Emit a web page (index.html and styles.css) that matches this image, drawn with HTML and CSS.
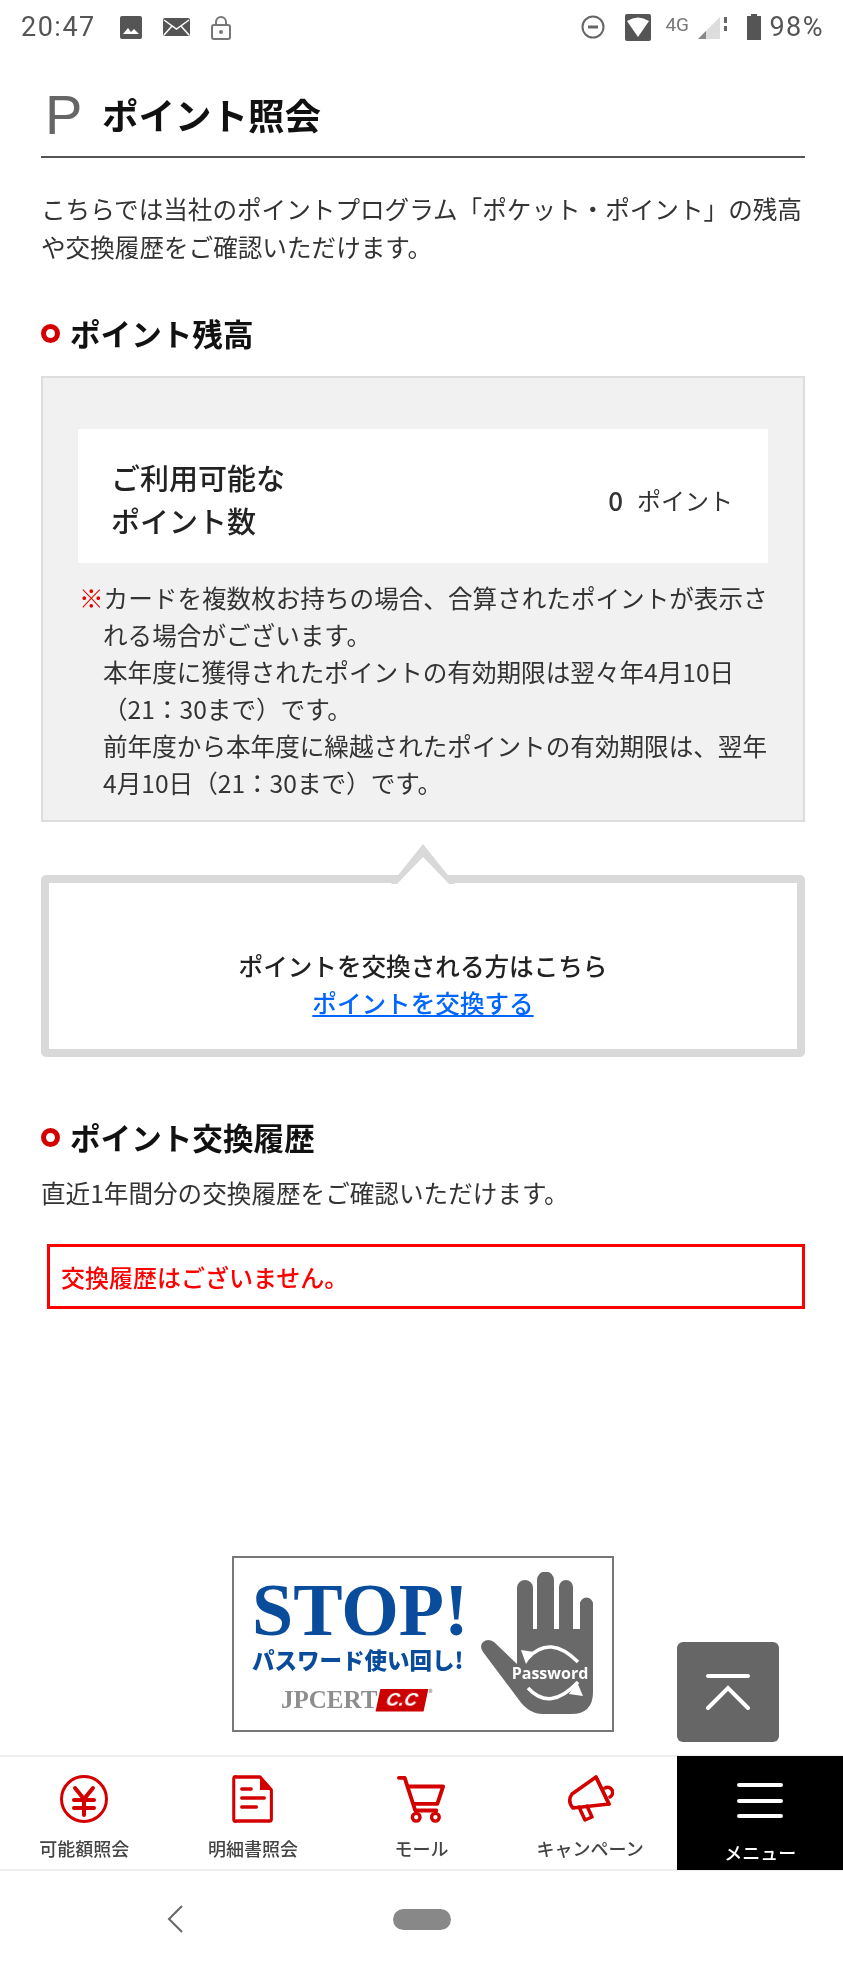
FILE: index.html
```html
<!DOCTYPE html>
<html lang="ja">
  <head>
    <meta charset="UTF-8">
    <title>ポイント照会</title>
    <meta name="viewport" content="width=device-width">
    <link rel="stylesheet" href="styles.css">
  </head>
  <body>
    <div class="page">
      <!-- Android status bar -->
      <div class="statusBar">
        <span class="clock">20:47</span>
        <svg class="statusIcon iconPicture" viewBox="0 0 22 23"><path fill="#555" d="M2 0h18a2 2 0 0 1 2 2v19a2 2 0 0 1-2 2H2a2 2 0 0 1-2-2V2a2 2 0 0 1 2-2z"/><path fill="#fff" d="M3 18l5-6 3 4 3-3 5 5z"/></svg>
        <svg class="statusIcon iconMail" viewBox="0 0 27 18"><rect width="27" height="18" rx="2" fill="#555"/><path d="M1 2l12.500 9L26 2M1 17l8-9M26 17l-8-9" fill="none" stroke="#fff" stroke-width="1.500"/></svg>
        <svg class="statusIcon iconLock" viewBox="0 0 22 25"><path d="M6 11V7a5 5 0 0 1 10 0v4" fill="none" stroke="#777" stroke-width="2"/><rect x="2" y="10" width="18" height="14" rx="2" fill="none" stroke="#777" stroke-width="2"/><circle cx="11" cy="17" r="2" fill="#777"/></svg>
        <span class="statusGap"></span>
        <svg class="statusIcon iconDnd" viewBox="0 0 24 24"><circle cx="12" cy="12" r="10.500" fill="none" stroke="#666" stroke-width="2"/><rect x="7" y="10.500" width="10" height="3" fill="#666"/></svg>
        <svg class="statusIcon iconWifi" viewBox="0 0 26 27"><rect width="26" height="27" rx="2" fill="#555"/><path d="M2 7q11-7 22 0L13 23z" fill="#fff"/></svg>
        <span class="netType">4G</span>
        <svg class="statusIcon iconSignal" viewBox="0 0 31 24"><path d="M0 24L22 2v22z" fill="#ddd"/><path d="M0 24l8-8v8z" fill="#888"/><rect x="26" y="2" width="3" height="6" fill="#666"/><rect x="26" y="11" width="3" height="5" fill="#666"/></svg>
        <svg class="statusIcon iconBattery" viewBox="0 0 14 26"><path d="M4 0h6v2h4v24H0V2h4z" fill="#555"/></svg>
        <span class="batteryLevel">98%</span>
      </div>

      <main class="content">
        <h1 class="pageTitle"><span class="titleLetter">P</span>ポイント照会</h1>
        <p class="bodyText intro">こちらでは当社のポイントプログラム「ポケット・ポイント」の残高<br>や交換履歴をご確認いただけます。</p>

        <h2 class="sectionTitle balanceTitle">ポイント残高</h2>
        <section class="balancePanel">
          <div class="balanceRow">
            <div class="balanceLabel">ご利用可能な<br>ポイント数</div>
            <div class="balanceValue"><strong>0</strong><span>ポイント</span></div>
          </div>
          <p class="balanceNote"><span class="noteMark">※</span>カードを複数枚お持ちの場合、合算されたポイントが表示さ<br>れる場合がございます。<br>本年度に獲得されたポイントの有効期限は翌々年4月10日<br>（21：30まで）です。<br>前年度から本年度に繰越されたポイントの有効期限は、翌年<br>4月10日（21：30まで）です。</p>
        </section>

        <section class="callout">
          <p class="calloutText">ポイントを交換される方はこちら</p>
          <a class="calloutLink" href="#">ポイントを交換する</a>
        </section>

        <h2 class="sectionTitle historyTitle">ポイント交換履歴</h2>
        <p class="bodyText historyText">直近1年間分の交換履歴をご確認いただけます。</p>
        <div class="errorBox">交換履歴はございません。</div>

        <div class="banner">
          <div class="bannerText">
            <div class="bannerStop">STOP!</div>
            <div class="bannerSub">パスワード使い回し!</div>
            <div class="bannerLogo"><span class="logoName">JPCERT</span><span class="logoBadge">C.C</span><span class="logoMark">®</span></div>
          </div>
          <svg class="bannerHand" viewBox="0 0 112 142">
            <path fill="#696969" d="M36 16a8 8 0 0 1 16 0v41h4V8a8.500 8.500 0 0 1 17 0v49h5V15a7 7 0 0 1 14 0v42h7V32a6.500 6.500 0 0 1 13 0v88q0 22-22 22H62q-14 0-24-14L2 80q-4-6 0-10q5-4 11 0l23 22z"/>
            <path fill="none" stroke="#fff" stroke-width="3.500" d="M47 86q22-24 50 4M47 116q22 24 50-6"/>
            <path fill="#fff" d="M40 78l13 2-8 12zM102 124l-14-2 8-12z"/>
            <text class="handText" x="69" y="107" text-anchor="middle">Password</text>
          </svg>
        </div>
      </main>

      <button class="toTop" type="button" aria-label="top">
        <svg viewBox="0 0 44 36" width="44" height="36"><path d="M2 2h40M2 34l20-20 20 20" fill="none" stroke="#fff" stroke-width="4" stroke-linecap="round"/></svg>
      </button>

      <nav class="tabBar">
        <a class="tab" href="#">
          <svg class="tabIcon" viewBox="0 0 48 48"><circle cx="24" cy="24" r="22.500" fill="none" stroke="#d40000" stroke-width="3"/><path d="M15 13l9 11 9-11M14 25h20M14 33h20M24 24v16" fill="none" stroke="#d40000" stroke-width="4" stroke-linecap="round"/></svg>
          <span>可能額照会</span>
        </a>
        <a class="tab" href="#">
          <svg class="tabIcon tabIconDoc" viewBox="0 0 48 48" preserveAspectRatio="none"><path d="M5 2h27l13 13v29a2 2 0 0 1-2 2H5a2 2 0 0 1-3-2V4a2 2 0 0 1 3-2z" fill="none" stroke="#d40000" stroke-width="3.500" stroke-linejoin="round"/><path d="M32 2v13h13z" fill="#d40000"/><path d="M11 14h11M11 23h26M11 32h17" fill="none" stroke="#d40000" stroke-width="3.500" stroke-linecap="round"/></svg>
          <span>明細書照会</span>
        </a>
        <a class="tab" href="#">
          <svg class="tabIcon" viewBox="0 0 50 50"><path d="M2 3h6l11 34h22" fill="none" stroke="#d40000" stroke-width="4" stroke-linecap="round" stroke-linejoin="round"/><path d="M11 12h37l-6 18H17" fill="none" stroke="#d40000" stroke-width="4" stroke-linejoin="round"/><circle cx="20" cy="44" r="4" fill="none" stroke="#d40000" stroke-width="3.500"/><circle cx="40" cy="44" r="4" fill="none" stroke="#d40000" stroke-width="3.500"/></svg>
          <span>モール</span>
        </a>
        <a class="tab" href="#">
          <svg class="tabIcon" viewBox="0 0 48 48"><path d="M6 19l24-17 13 27-27 3-9 1q-6-7-1-14z" fill="none" stroke="#d40000" stroke-width="3.500" stroke-linejoin="round"/><path d="M30 2l13 27M39 13a5 5 0 0 1 5 9M13 32l6 13 7-3-5-11" fill="none" stroke="#d40000" stroke-width="3.500" stroke-linejoin="round" stroke-linecap="round"/></svg>
          <span>キャンペーン</span>
        </a>
        <a class="tab tabMenu" href="#">
          <svg class="tabIcon" viewBox="0 0 48 48"><path d="M3 2h42M3 18h42M3 33h42" fill="none" stroke="#fff" stroke-width="4" stroke-linecap="round"/></svg>
          <span>メニュー</span>
        </a>
      </nav>

      <div class="navBar">
        <svg class="navBack" viewBox="0 0 17 28"><path d="M15 1L2 14l13 13" fill="none" stroke="#666" stroke-width="2"/></svg>
        <span class="navHome"></span>
      </div>
    </div>
  </body>
</html>
```

FILE: styles.css
```css
*, *::before, *::after { box-sizing: border-box; }
html, body { margin: 0; background: #fff; }
body {
  color: #333;
  font-family: "Noto Sans CJK JP", "Noto Sans", sans-serif;
}
p { margin: 0; }
.page {
  position: relative;
  width: 843px;
  height: 1967px;
  overflow: hidden;
  filter: blur(0.6px);
}

/* status bar */
.statusBar {
  display: flex;
  align-items: center;
  height: 54px;
  padding: 0 20px 0 21px;
  color: #555;
  font-family: Roboto, sans-serif;
}
.clock { font-size: 27px; letter-spacing: 1.500px; width: 99px; white-space: nowrap; }
.statusIcon { display: block; flex: none; }
.iconPicture { width: 22px; height: 23px; }
.iconMail { width: 27px; height: 18px; margin-left: 21px; }
.iconLock { width: 22px; height: 25px; margin-left: 20px; }
.statusGap { flex: 1; }
.iconDnd { width: 24px; height: 24px; }
.iconWifi { width: 26px; height: 27px; margin-left: 20px; }
.netType { font-size: 19px; width: 33px; margin-left: 14px; margin-top: -6px; color: #777; }
.iconSignal { width: 31px; height: 24px; }
.iconBattery { width: 14px; height: 26px; margin-left: 18px; }
.batteryLevel { font-size: 27px; letter-spacing: 1.500px; margin-left: 8px; margin-right: -1px; }

/* main column */
.content { padding: 0 38px 0 41px; }
.pageTitle {
  display: flex;
  align-items: center;
  margin: 0;
  height: 104px;
  padding: 39px 0 19px;
  border-bottom: 2px solid #555;
  color: #111;
  font-size: 36.500px;
  font-weight: 700;
  line-height: 44px;
}
.titleLetter {
  width: 61px;
  padding-left: 4px;
  color: #666;
  font-family: "Liberation Sans", sans-serif;
  font-size: 56px;
  font-weight: 400;
}
.bodyText {
  font-size: 24.600px;
  line-height: 38px;
  white-space: nowrap;
}
.intro { margin-top: 31px; }
.sectionTitle {
  display: flex;
  align-items: center;
  margin: 0;
  color: #111;
  font-size: 30.600px;
  font-weight: 700;
  line-height: 40px;
}
.sectionTitle::before {
  content: "";
  width: 19px;
  height: 19px;
  margin-right: 10px;
  border: 5px solid #d40000;
  border-radius: 50%;
}
.balanceTitle { margin-top: 48px; }
.balancePanel {
  margin-top: 23px;
  padding: 51px 35px 19px;
  background: #f1f1f1;
  border: 2px solid #ddd;
}
.balanceRow {
  display: flex;
  justify-content: space-between;
  align-items: center;
  padding: 27px 35px 21px 33px;
  background: #fff;
}
.balanceLabel {
  color: #222;
  font-size: 29px;
  font-weight: 500;
  line-height: 43px;
}
.balanceValue {
  display: flex;
  align-items: center;
  gap: 14px;
  font-size: 24px;
  white-space: nowrap;
}
.balanceValue strong { font-size: 26px; font-weight: 500; }
.balanceNote {
  margin-top: 16px;
  padding-left: 25px;
  text-indent: -24px;
  font-size: 24.600px;
  line-height: 37px;
  white-space: nowrap;
}
.noteMark { color: #e60000; }

/* exchange callout */
.callout {
  position: relative;
  margin-top: 53px;
  padding: 64px 0 28px;
  border: 8px solid #d9d9d9;
  border-radius: 5px;
  text-align: center;
  font-size: 24.600px;
  line-height: 37px;
}
.callout::before, .callout::after {
  content: "";
  position: absolute;
  left: 50%;
  clip-path: polygon(50% 0, 100% 100%, 0 100%);
}
.callout::before {
  top: -39px;
  width: 64px;
  height: 40px;
  margin-left: -32px;
  background: #d9d9d9;
}
.callout::after {
  top: -26px;
  width: 52px;
  height: 27px;
  margin-left: -26px;
  background: #fff;
}
.calloutText { color: #222; font-weight: 500; }
.calloutLink { color: #0066ff; font-weight: 500; }

.historyTitle { margin-top: 60px; }
.historyText { margin-top: 16px; }
.errorBox {
  display: flex;
  align-items: center;
  height: 65px;
  margin: 33px 0 0 6px;
  padding-left: 11px;
  border: 3px solid #f00;
  color: #f00;
  font-size: 24px;
  font-weight: 500;
}

/* banner */
.banner {
  display: flex;
  justify-content: space-between;
  align-items: flex-start;
  width: 382px;
  height: 176px;
  margin: 247px auto 0;
  padding: 14px 19px 0 18px;
  border: 2px solid #777;
  background: #fff;
}
.bannerText { padding-top: 4px; color: #0a4c9c; }
.bannerStop {
  font-family: "Liberation Serif", serif;
  font-size: 74px;
  font-weight: 700;
  line-height: 68px;
}
.bannerSub {
  font-size: 22.500px;
  font-weight: 900;
  line-height: 30px;
  white-space: nowrap;
}
.bannerLogo {
  display: flex;
  align-items: center;
  margin: 14px 0 0 29px;
}
.logoName {
  color: #8e8e8e;
  font-family: "Liberation Serif", serif;
  font-size: 25px;
  font-weight: 700;
  line-height: 24px;
}
.logoBadge {
  width: 48px;
  height: 22px;
  margin-left: 1px;
  background: #cc0000;
  color: #fff;
  font-family: "Liberation Sans", sans-serif;
  font-size: 18px;
  font-style: italic;
  font-weight: 700;
  line-height: 22px;
  text-align: center;
  transform: skewX(-12deg);
}
.logoMark { margin: -14px 0 0 2px; color: #555; font-size: 9px; line-height: 10px; }
.bannerHand { flex: none; width: 112px; height: 142px; }
.handText {
  fill: #fff;
  font-family: "Open Sans", sans-serif;
  font-size: 16px;
  font-weight: 700;
}

/* back to top */
.toTop {
  position: absolute;
  top: 1642px;
  left: 677px;
  display: flex;
  align-items: center;
  justify-content: center;
  width: 102px;
  height: 100px;
  padding: 0;
  border: 0;
  border-radius: 6px;
  background: #666;
}

/* bottom tabs */
.tabBar {
  display: grid;
  grid-template-columns: repeat(5, 1fr);
  height: 116px;
  margin-top: 23px;
  border-top: 2px solid #eee;
  border-bottom: 2px solid #eee;
}
.tab {
  display: flex;
  flex-direction: column;
  align-items: center;
  padding-top: 18px;
  color: #444;
  font-size: 18px;
  font-weight: 500;
  line-height: 26px;
  text-decoration: none;
}
.tabIcon { display: block; width: 48px; height: 48px; margin-bottom: 12px; }
.tabIconDoc { width: 42px; }
.tabMenu {
  margin: -1px 0 -1px 3px;
  background: #000;
  color: #fff;
}
.tabMenu .tabIcon { margin-top: 9px; margin-bottom: 8px; }

/* android nav bar */
.navBar {
  display: flex;
  align-items: center;
  height: 96px;
  padding: 0 0 0 167px;
}
.navBack { width: 17px; height: 28px; }
.navHome {
  width: 58px;
  height: 21px;
  margin-left: 209px;
  border-radius: 11px;
  background: #888;
}
```
